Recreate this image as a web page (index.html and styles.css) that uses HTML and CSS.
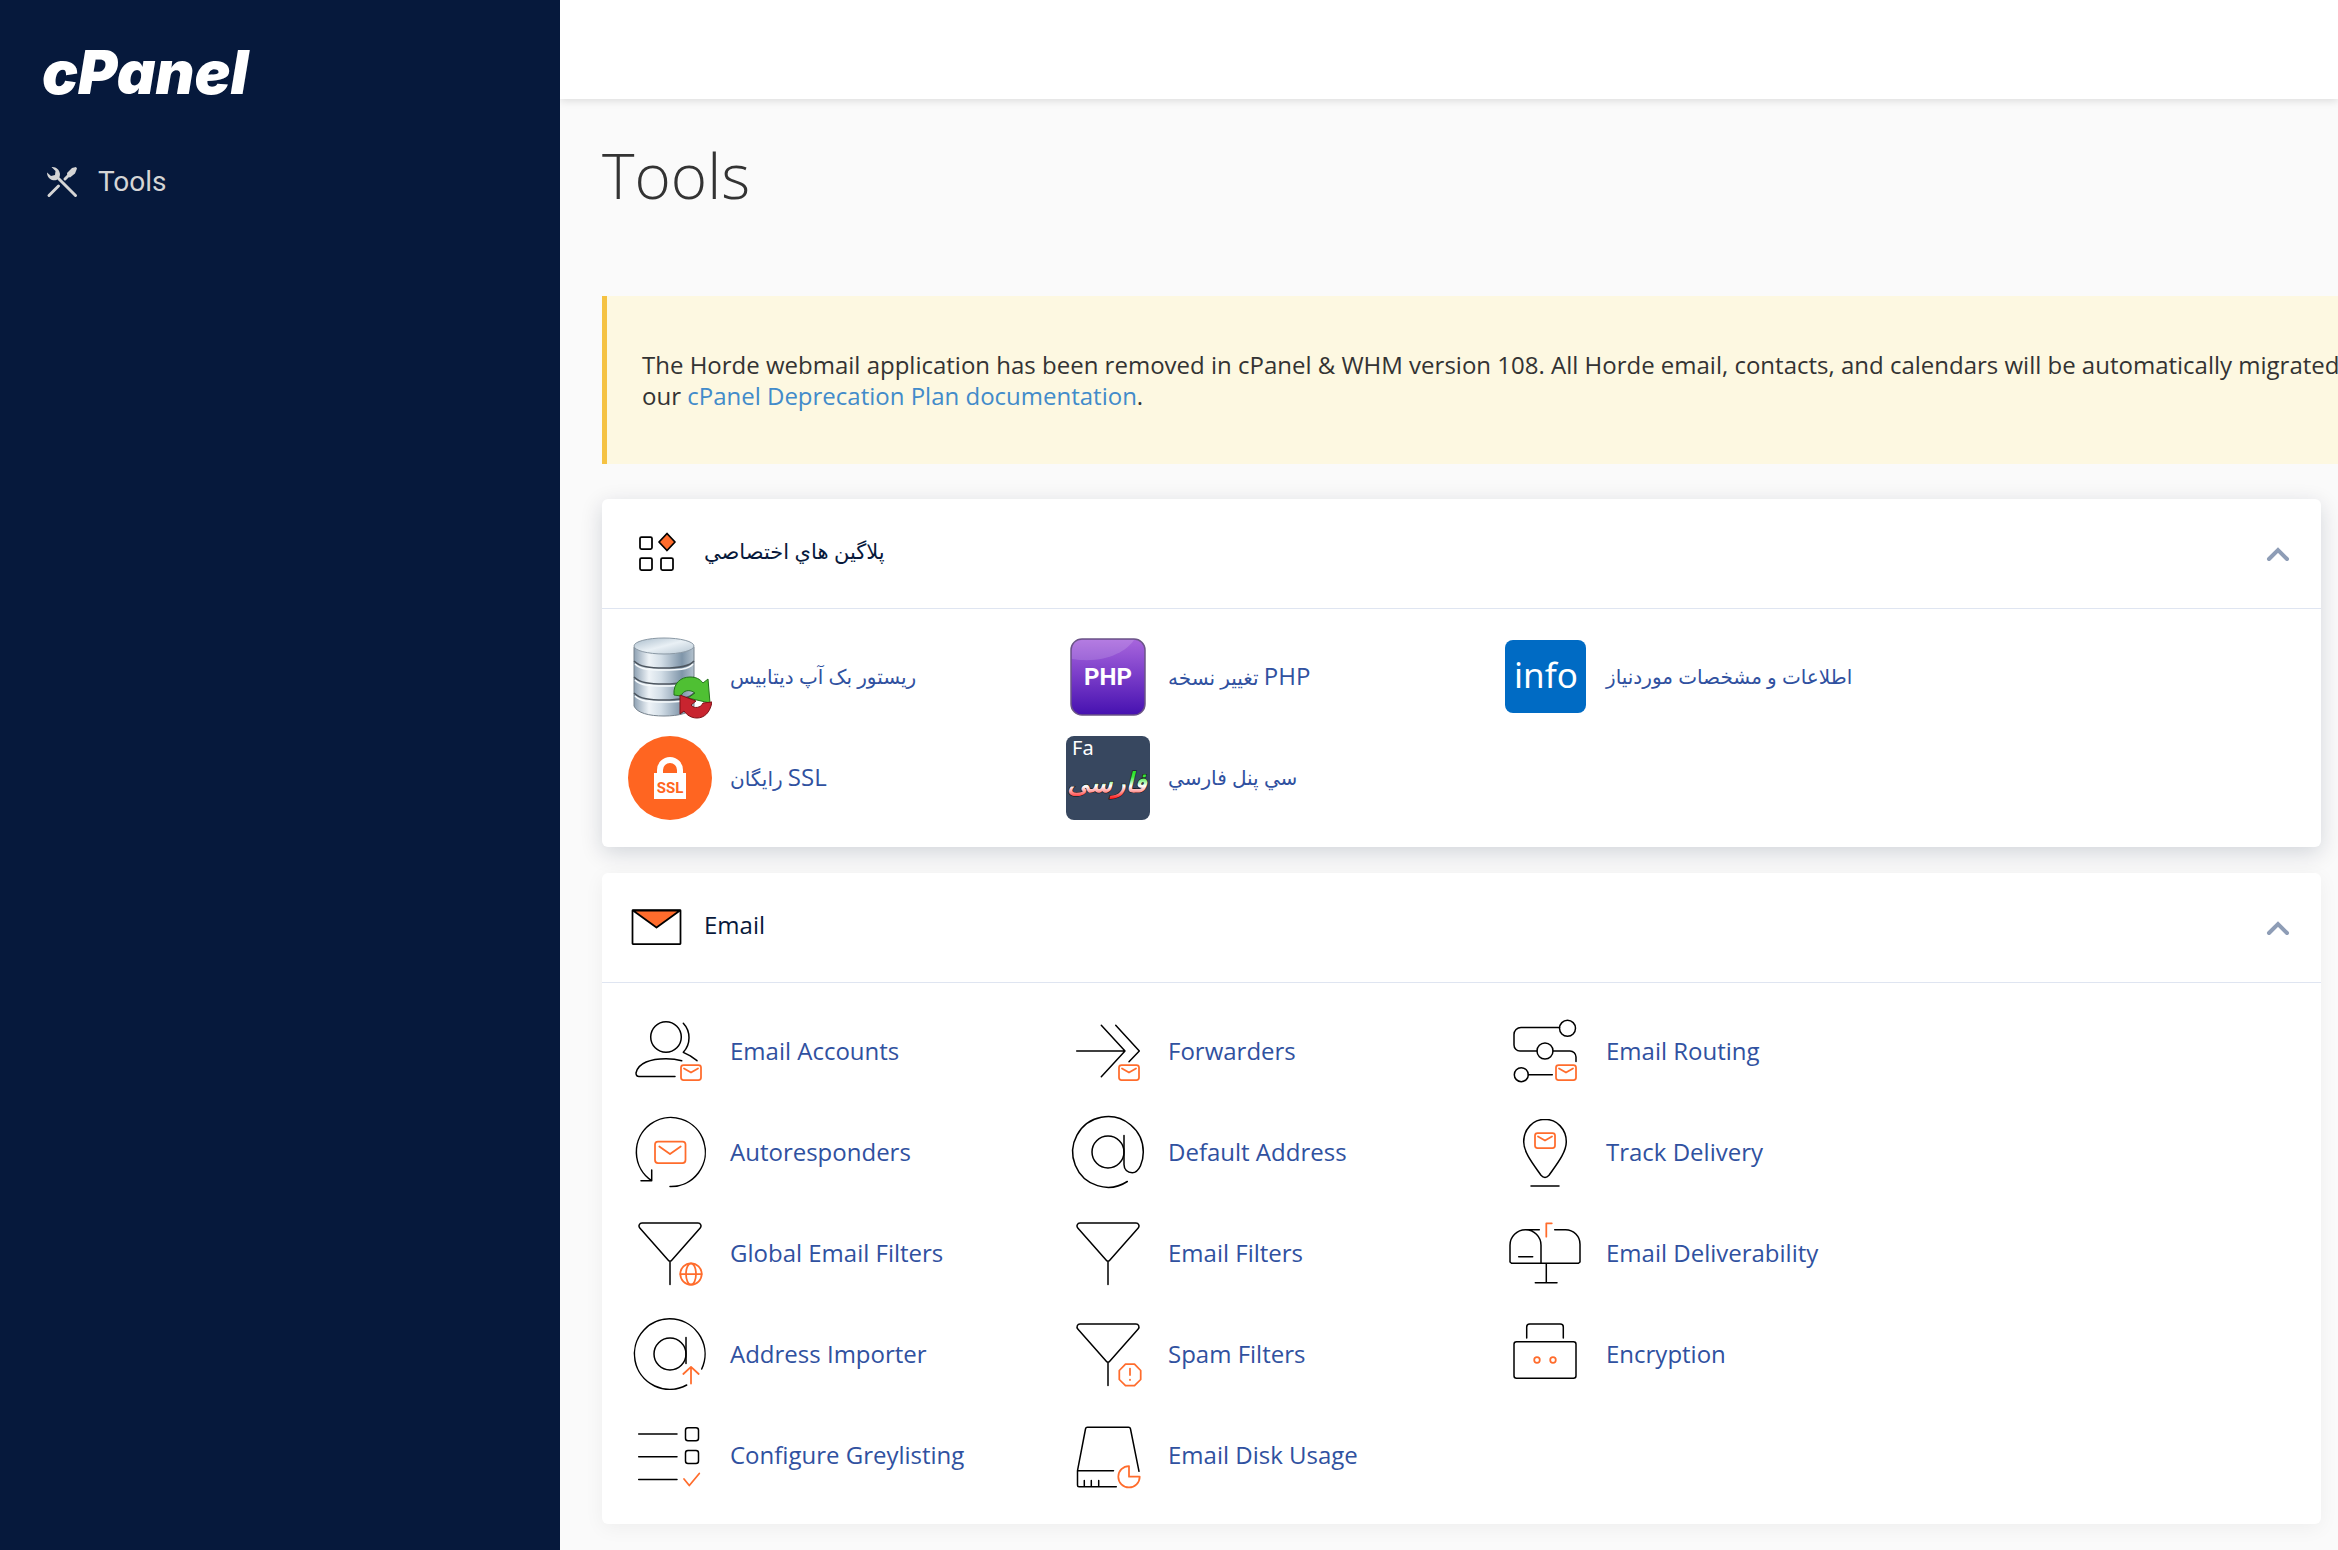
FILE: index.html
```html
<!DOCTYPE html>
<html lang="en">
  <head>
    <meta charset="UTF-8" />
    <meta name="viewport" content="width=device-width, initial-scale=1.0" />
    <title>cPanel - Tools</title>
    <link rel="stylesheet" href="styles.css">
  </head>
  <body>
    <!-- Shared shapes -->
    <svg class="defs" width="0" height="0" aria-hidden="true">
      <symbol id="mail" viewBox="0 0 22 17">
        <rect x="1" y="1" width="20" height="15" rx="2.500" />
        <path d="M4 4.500l7 4 7-4" />
      </symbol>
      <symbol id="funnel" viewBox="0 0 84 84">
        <path d="M14 12h56a3 3 0 0 1 2.200 5L43.500 49.500a2 2 0 0 1-3 0L11.800 17A3 3 0 0 1 14 12zM42 50.500v23" />
      </symbol>
    </svg>

    <aside class="sidebar">
      <a class="logo" href="#">cPanel</a>
      <nav>
        <a class="nav-link" href="#">
          <svg class="nav-icon" viewBox="0 0 32 32">
            <path class="handle" d="M12 12l17.500 17.500M3 29.500l9.500-9.500M19 13l4-4" />
            <path class="head" d="M5.500 1A7.500 7.500 0 0 1 13.500 11l-3 3A7.500 7.500 0 0 1 1 6.500l4 3.500 4-1 .5-4zM21.500 10.500l-.5-3.500 5-5 4-1 1 1.500-2 5-5 4z" />
          </svg>
          <span>Tools</span>
        </a>
      </nav>
    </aside>

    <div class="page">
      <header class="topbar"></header>
      <main>
        <h1>Tools</h1>

        <div class="notice">
          <p>
            The Horde webmail application has been removed in cPanel &amp; WHM version 108. All Horde email, contacts, and calendars will be automatically migrated<br>
            our <a href="#">cPanel Deprecation Plan documentation</a>.
          </p>
        </div>

        <section class="card raised">
          <div class="card-header">
            <svg class="card-icon" viewBox="0 0 54 54">
              <rect x="10" y="10" width="12" height="12" rx="1.500" />
              <rect x="10" y="31" width="12" height="12" rx="1.500" />
              <rect x="31" y="31" width="12" height="12" rx="1.500" />
              <path class="fill" d="M37 6.500l8 8.500-8 8.500-8-8.500z" />
            </svg>
            <h2 class="fa" lang="fa">پلاگين هاي اختصاصي</h2>
            <button type="button" aria-label="Collapse plugins">
              <svg viewBox="0 0 24 16"><path d="M3 13l9-9 9 9" /></svg>
            </button>
          </div>
          <ul class="items">
            <li>
              <a href="#">
                <svg class="picture" viewBox="0 0 84 84">
                  <defs>
                    <linearGradient id="steel">
                      <stop offset="0" stop-color="#8ea1b3" />
                      <stop offset="0.250" stop-color="#eef3f7" />
                      <stop offset="0.450" stop-color="#d3dee7" />
                      <stop offset="0.800" stop-color="#7f95a9" />
                      <stop offset="1" stop-color="#b4c2ce" />
                    </linearGradient>
                    <linearGradient id="lid" x2="1" y2="1">
                      <stop offset="0" stop-color="#a9bccb" />
                      <stop offset="0.500" stop-color="#e9f0f5" />
                      <stop offset="1" stop-color="#b5c5d2" />
                    </linearGradient>
                  </defs>
                  <path fill="url(#steel)" stroke="#76828d" d="M6 12v59c3 7 15 10 30 10s27-3 30-10V12z" />
                  <path fill="none" stroke="#4d565f" stroke-width="1.500" d="M6 26c6 6 16 7 30 7s25-1 30-7M6 42c6 6 16 7 30 7s25-1 30-7M6 58c6 6 16 7 30 7s25-1 30-7" />
                  <path fill="none" stroke="#f6fafc" stroke-width="1.500" d="M7 29c6 6 16 6 29 6s24 0 29-6M7 45c6 6 16 6 29 6s24 0 29-6M7 61c6 6 16 6 29 6s24 0 29-6" />
                  <ellipse cx="36" cy="11" rx="30" ry="8" fill="url(#lid)" stroke="#8b99a5" />
                  <path fill="#4fc033" stroke="#23731a" d="M46 60c-1-12 7-18 16-18 6 0 10 2 13 6l5-4 2 24-22-5 7-5c-5-4-12-3-14 3z" />
                  <path fill="#c8242f" stroke="#7d1016" d="M52 60l16 6-5 4c3 4 10 3 12-2l9-1c-2 11-8 16-15 16-6 0-10-3-13-7l-4 3z" />
                </svg>
                <span class="fa" lang="fa">ريستور بک آپ ديتابيس</span>
              </a>
            </li>
            <li>
              <a href="#">
                <svg class="picture" viewBox="0 0 84 84">
                  <defs>
                    <linearGradient id="violet" x2="0" y2="1">
                      <stop offset="0" stop-color="#a866dd" />
                      <stop offset="0.450" stop-color="#7d3fca" />
                      <stop offset="1" stop-color="#4611b0" />
                    </linearGradient>
                  </defs>
                  <rect x="5" y="4" width="74" height="76" rx="11" fill="url(#violet)" stroke="#6b5487" stroke-width="1.500" />
                  <path fill="#fff" opacity="0.150" d="M6 24V16C6 8 10 5 16 5h52c-8 12-30 24-62 19z" />
                  <text class="php" x="42" y="50">PHP</text>
                </svg>
                <span class="fa" lang="fa">تغيير نسخه <span class="latin">PHP</span></span>
              </a>
            </li>
            <li>
              <a href="#">
                <svg class="picture" viewBox="0 0 84 84">
                  <rect x="1" y="5" width="81" height="73" rx="8" fill="#006bc4" />
                  <text class="info" x="42" y="53">info</text>
                </svg>
                <span class="fa" lang="fa">اطلاعات و مشخصات موردنياز</span>
              </a>
            </li>
            <li>
              <a href="#">
                <svg class="picture" viewBox="0 0 84 84">
                  <circle cx="42" cy="42" r="42" fill="#ff6521" />
                  <rect x="26" y="37" width="32" height="26" fill="#fff" />
                  <path fill="none" stroke="#fff" stroke-width="6" d="M32 38v-4a10 10 0 0 1 20 0v4" />
                  <text class="ssl" x="42" y="57">SSL</text>
                </svg>
                <span class="fa" lang="fa">رايگان <span class="latin">SSL</span></span>
              </a>
            </li>
            <li>
              <a href="#">
                <svg class="picture" viewBox="0 0 84 84">
                  <defs>
                    <linearGradient id="flag" gradientUnits="userSpaceOnUse" x1="0" y1="32" x2="0" y2="68">
                      <stop offset="0" stop-color="#1fe01f" />
                      <stop offset="0.250" stop-color="#3ee83e" />
                      <stop offset="0.500" stop-color="#fff" />
                      <stop offset="0.850" stop-color="#ff1a1a" />
                    </linearGradient>
                  </defs>
                  <rect width="84" height="84" rx="8" fill="#37475f" />
                  <text class="farsi" x="41" y="56">فارسی</text>
                  <text class="code" x="6" y="19">Fa</text>
                </svg>
                <span class="fa" lang="fa">سي پنل فارسي</span>
              </a>
            </li>
          </ul>
        </section>

        <section class="card">
          <div class="card-header">
            <svg class="card-icon" viewBox="0 0 54 54">
              <path class="fill" d="M3 9.500h47L26.500 26.500z" />
              <rect x="2.500" y="9" width="48" height="34" rx="0.500" />
            </svg>
            <h2>Email</h2>
            <button type="button" aria-label="Collapse email">
              <svg viewBox="0 0 24 16"><path d="M3 13l9-9 9 9" /></svg>
            </button>
          </div>
          <ul class="items">
            <li>
              <a href="#">
                <svg class="line-icon" viewBox="0 0 84 84">
                  <circle cx="38" cy="28" r="15.300" />
                  <path d="M55.300 14.300c7.600 8 7.600 21 0 29l7 3.500 6.700 4.900M53.700 51.700C49 50.300 44 49.700 38 49.700c-15 0-28 4-30 14.300 0 2 1 3.500 3 3.500h36" />
                  <use class="accent" href="#mail" x="52" y="55" width="22" height="17" />
                </svg>
                <span>Email Accounts</span>
              </a>
            </li>
            <li>
              <a href="#">
                <svg class="line-icon" viewBox="0 0 84 84">
                  <path d="M10.700 42H59M35.300 16.300L59 42 35.300 67.700M49.700 16.300L73.300 42 63 52.700" />
                  <use class="accent" href="#mail" x="52" y="55" width="22" height="17" />
                </svg>
                <span>Forwarders</span>
              </a>
            </li>
            <li>
              <a href="#">
                <svg class="line-icon" viewBox="0 0 84 84">
                  <circle cx="63.500" cy="19.300" r="8" />
                  <circle cx="41" cy="42" r="8" />
                  <circle cx="17.300" cy="65.700" r="7" />
                  <path d="M55.500 18.500H17a7 7 0 0 0-7 7V36a6 6 0 0 0 6 6h17M49 42h17a6 6 0 0 1 6 6v4.500M24.300 65.700h24" />
                  <use class="accent" href="#mail" x="51" y="55" width="22" height="17" />
                </svg>
                <span>Email Routing</span>
              </a>
            </li>
            <li>
              <a href="#">
                <svg class="line-icon" viewBox="0 0 84 84">
                  <path d="M42 76.500A34.500 34.500 0 1 0 23.700 70.700M23.700 60v10.700H13" />
                  <path class="accent" d="M31.300 36.500L42 44l10.700-7.500" />
                  <rect class="accent" x="27" y="31.500" width="30.500" height="21.500" rx="3" />
                </svg>
                <span>Autoresponders</span>
              </a>
            </li>
            <li>
              <a href="#">
                <svg class="line-icon" viewBox="0 0 84 84">
                  <circle cx="42" cy="42" r="16" />
                  <path d="M58 25.500V54.500c0 5 3.500 8.200 8.200 8.200C73.500 62.700 77.300 51 77.300 42A35.300 35.300 0 1 0 61.300 71.500" />
                </svg>
                <span>Default Address</span>
              </a>
            </li>
            <li>
              <a href="#">
                <svg class="line-icon" viewBox="0 0 84 84">
                  <path d="M41 9.300c-12 0-21.300 10-21.300 22.500 0 11 10 23 17.300 33.500 2.500 2.800 5.500 2.800 8 0 7.300-10.500 17.300-22.500 17.300-33.500C62.300 19.300 53 9.300 41 9.300zM27 76h28" />
                  <use class="accent" href="#mail" x="30" y="22" width="22" height="17" />
                </svg>
                <span>Track Delivery</span>
              </a>
            </li>
            <li>
              <a href="#">
                <svg class="line-icon" viewBox="0 0 84 84">
                  <use href="#funnel" />
                  <g class="accent">
                    <circle cx="63" cy="63" r="10.700" />
                    <ellipse cx="63" cy="63" rx="5" ry="10.700" />
                    <path d="M52.300 63h21.400" />
                  </g>
                </svg>
                <span>Global Email Filters</span>
              </a>
            </li>
            <li>
              <a href="#">
                <svg class="line-icon" viewBox="0 0 84 84">
                  <use href="#funnel" />
                </svg>
                <span>Email Filters</span>
              </a>
            </li>
            <li>
              <a href="#">
                <svg class="line-icon" viewBox="0 0 84 84">
                  <path d="M35.300 18.700H21.500A15.500 15.500 0 0 0 6 34.200V51l1.500 1.300h67L76 51V33.500a14.500 14.500 0 0 0-14.500-14.800H50.700M21.500 18.700A15.500 15.500 0 0 1 37 34.200v18M14.700 45.700h14M42.300 52.300v19.400M31.300 71.700H53" />
                  <path class="accent" d="M42.300 25.700V12.300h5.500" />
                </svg>
                <span>Email Deliverability</span>
              </a>
            </li>
            <li>
              <a href="#">
                <svg class="line-icon" viewBox="0 0 84 84">
                  <circle cx="42" cy="42" r="16" />
                  <path d="M73.700 57A35.300 35.300 0 1 0 58.700 73M58 25.500v26" />
                  <path class="accent" d="M63 71.500V55M55.300 62l7.700-7.200 7.700 7.200" />
                </svg>
                <span>Address Importer</span>
              </a>
            </li>
            <li>
              <a href="#">
                <svg class="line-icon" viewBox="0 0 84 84">
                  <use href="#funnel" />
                  <path class="accent" d="M59.500 52.200h9l6.200 6.300v9l-6.200 6.200h-9l-6.200-6.200v-9zM64 56.500v6.500M64 67.500v.5" />
                </svg>
                <span>Spam Filters</span>
              </a>
            </li>
            <li>
              <a href="#">
                <svg class="line-icon" viewBox="0 0 84 84">
                  <rect x="10" y="29.700" width="62" height="36.600" rx="2.500" />
                  <path d="M22.700 26V15a3 3 0 0 1 3-3h30.600a3 3 0 0 1 3 3v11" />
                  <circle class="accent" cx="33" cy="48" r="2.800" />
                  <circle class="accent" cx="49" cy="48" r="2.800" />
                </svg>
                <span>Encryption</span>
              </a>
            </li>
            <li>
              <a href="#">
                <svg class="line-icon" viewBox="0 0 84 84">
                  <path d="M10.700 21H49M10.700 43.700H49M10.700 66.500H49" />
                  <rect x="57.500" y="14.700" width="13" height="13" rx="2.500" />
                  <rect x="57.500" y="37.500" width="13" height="13" rx="2.500" />
                  <path class="accent" d="M56 66l5.300 6.500 10-12" />
                </svg>
                <span>Configure Greylisting</span>
              </a>
            </li>
            <li>
              <a href="#">
                <svg class="line-icon" viewBox="0 0 84 84">
                  <path d="M50.300 73.700H13a1.500 1.500 0 0 1-1.500-1.500V57.700L19.500 16a2 2 0 0 1 2-1.700h41a2 2 0 0 1 2 1.700L73 58.300M11.500 57.700h36M18.300 67.500v6M25.300 67.500v6M32.700 67.500v6" />
                  <path class="accent" d="M63 53v10.700h10.700A10.700 10.700 0 1 1 63 53z" />
                </svg>
                <span>Email Disk Usage</span>
              </a>
            </li>
          </ul>
        </section>
      </main>
    </div>
  </body>
</html>
```
FILE: styles.css
```css
* {
    box-sizing: border-box;
}
body {
    display: flex;
    min-height: 100vh;
    margin: 0;
    font-family: "Open Sans", "DejaVu Sans", sans-serif;
    font-size: 24px;
    color: #333;
    background: #fafafa;
}
a {
    color: #428bca;
    text-decoration: none;
}
.defs {
    position: absolute;
}

/* Sidebar */
.sidebar {
    flex: 0 0 560px;
    padding: 36px 42px;
    background: #06193c;
}
.logo {
    display: block;
    font-family: Inter, sans-serif;
    font-size: 60px;
    font-style: italic;
    font-weight: 900;
    line-height: 72px;
    color: #fff;
}
.nav-link {
    display: flex;
    align-items: center;
    gap: 20px;
    margin-top: 54px;
    padding-left: 4px;
    font-family: Roboto, sans-serif;
    font-size: 28px;
    line-height: 40px;
    color: #d5d5d5;
}
.nav-icon {
    width: 32px;
    height: 32px;
}
.nav-icon .handle {
    fill: none;
    stroke: #d5d5d5;
    stroke-width: 3;
    stroke-linecap: round;
}
.nav-icon .head {
    fill: #d5d5d5;
}

/* Page */
.page {
    flex: 1;
    min-width: 0;
    overflow: hidden;
}
.topbar {
    height: 99px;
    background: #fff;
    box-shadow: 0 2px 8px rgba(0, 0, 0, 0.12);
}
main {
    padding: 41px 17px 24px 42px;
}
h1 {
    margin: 0 0 86px;
    font-size: 62px;
    font-weight: 300;
    line-height: 70px;
}
.notice {
    margin: 0 -17px 35px 0;
    padding: 53px 35px;
    border-left: 5px solid #f5c242;
    background: #fdf8e1;
    overflow: hidden;
}
.notice p {
    margin: 0;
    line-height: 31px;
    white-space: nowrap;
}

/* Cards */
.card {
    margin-bottom: 26px;
    border-radius: 6px;
    background: #fff;
    box-shadow: 0 4px 20px rgba(0, 0, 0, 0.05);
}
.card:last-child {
    margin-bottom: 0;
}
.raised {
    box-shadow: 0 6px 22px rgba(8, 25, 59, 0.16);
}
.card-header {
    display: flex;
    align-items: center;
    gap: 20px;
    height: 110px;
    padding: 0 28px;
    border-bottom: 1px solid #dfe5f1;
}
.card-icon {
    width: 54px;
    height: 54px;
    fill: none;
    stroke: #000;
    stroke-width: 1.75;
    stroke-linejoin: round;
}
.card-icon .fill {
    fill: #ff6c2c;
}
h2 {
    flex: 1;
    margin: 0;
    padding-bottom: 6px;
    font-size: 24px;
    font-weight: 400;
    line-height: 36px;
    color: #08193b;
}
button {
    display: flex;
    padding: 4px 3px;
    border: none;
    background: none;
    cursor: pointer;
}
button svg {
    width: 24px;
    height: 16px;
    fill: none;
    stroke: #8e9db6;
    stroke-width: 4;
    stroke-linecap: round;
}
.items {
    display: grid;
    grid-template-columns: repeat(auto-fill, 438px);
    row-gap: 17px;
    margin: 0;
    padding: 26px 0 27px 26px;
    list-style: none;
}
.items a {
    display: flex;
    align-items: center;
    gap: 18px;
    line-height: 36px;
    color: #3051a0;
}
.items a:hover {
    text-decoration: underline;
}
.items .fa {
    font-size: 20px;
}
h2.fa {
    font-size: 21px;
}
.fa .latin {
    font-size: 24px;
}
.line-icon, .picture {
    flex: none;
    width: 84px;
    height: 84px;
}
.line-icon {
    fill: none;
    stroke: #000;
    stroke-width: 1.5;
    stroke-linecap: round;
    stroke-linejoin: round;
}
.accent {
    stroke: #ff6c2c;
    stroke-width: 1.75;
}

/* Lettering inside the plugin pictures */
.picture text {
    fill: #fff;
    text-anchor: middle;
}
.picture .php {
    font: 700 24px Roboto, sans-serif;
}
.picture .info {
    font: 400 35px "Noto Sans", sans-serif;
}
.picture .ssl {
    font: 700 15px Roboto, sans-serif;
    fill: #ff6521;
}
.picture .farsi {
    font: italic 700 27px "DejaVu Sans", sans-serif;
    fill: url(#flag);
    stroke: #111;
    stroke-width: 1;
    paint-order: stroke;
}
.picture .code {
    font: 400 20px "Noto Sans", sans-serif;
    text-anchor: start;
}
```
